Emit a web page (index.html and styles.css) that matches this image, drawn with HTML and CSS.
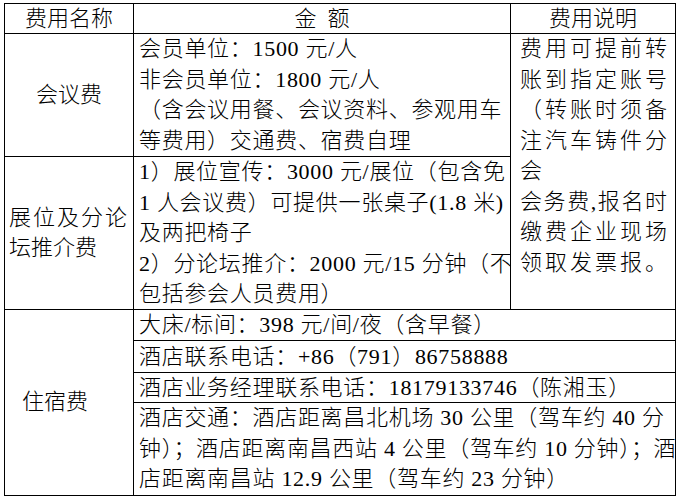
FILE: index.html
```html
<!DOCTYPE html>
<html lang="zh-CN">
<head>
<meta charset="utf-8">
<title>费用说明</title>
<link rel="stylesheet" href="styles.css">
</head>
<body>
<div class="sheet">
  <div class="cell head">费用名称</div>
  <div class="cell head">金&ensp;额</div>
  <div class="cell head">费用说明</div>

  <div class="cell name">会议费</div>
  <div class="cell body">
    <div class="ln">会员单位：1500 元/人</div>
    <div class="ln">非会员单位：1800 元/人</div>
    <div class="ln">（含会议用餐、会议资料、参观用车</div>
    <div class="ln">等费用）交通费、宿费自理</div>
  </div>
  <div class="cell note">
    <div class="ln j">费用可提前转</div>
    <div class="ln j">账到指定账号</div>
    <div class="ln j">（转账时须备</div>
    <div class="ln j">注汽车铸件分</div>
    <div class="ln">会</div>
    <div class="ln j">会务费,报名时</div>
    <div class="ln j">缴费企业现场</div>
    <div class="ln j">领取发票报。</div>
  </div>

  <div class="cell name left">
    <div class="ln j">展位及分论</div>
    <div class="ln">坛推介费</div>
  </div>
  <div class="cell body">
    <div class="ln">1）展位宣传：3000 元/展位（包含免</div>
    <div class="ln">1 人会议费）可提供一张桌子(1.8 米)</div>
    <div class="ln">及两把椅子</div>
    <div class="ln">2）分论坛推介：2000 元/15 分钟（不</div>
    <div class="ln">包括参会人员费用）</div>
  </div>

  <div class="cell name hotel">住宿费</div>
  <div class="cell wide">
    <div class="ln">大床/标间：398 元/间/夜（含早餐）</div>
  </div>
  <div class="cell wide">
    <div class="ln">酒店联系电话：+86（791）86758888</div>
  </div>
  <div class="cell wide">
    <div class="ln">酒店业务经理联系电话：18179133746（陈湘玉）</div>
  </div>
  <div class="cell wide multi">
    <div class="ln">酒店交通：酒店距离昌北机场 30 公里（驾车约 40 分</div>
    <div class="ln">钟）；酒店距离南昌西站 4 公里（驾车约 10 分钟）；酒</div>
    <div class="ln">店距离南昌站 12.9 公里（驾车约 23 分钟）</div>
  </div>
</div>
</body>
</html>
```

FILE: styles.css
```css
html, body {
  margin: 0;
  padding: 0;
  background: #fff;
}

body {
  padding: 3px 0 0 4px;
  font-family: "Liberation Serif", "Noto Sans CJK SC", serif;
  font-size: 22px;
  font-weight: 300;
  color: #000;
}

.sheet {
  display: grid;
  grid-template-columns: 128px 376px 164px;
  grid-template-rows: 29px 122px 152px 30px 31px 29px 92px;
  gap: 1px;
  padding: 1px;
  background: #000;
  width: max-content;
}

.cell {
  background: #fff;
  line-height: 30.5px;
  white-space: nowrap;
}

.ln {
  height: 30.5px;
}

.head {
  display: flex;
  align-items: center;
  justify-content: center;
  line-height: 29px;
}

.name {
  display: flex;
  flex-direction: column;
  justify-content: center;
  align-items: center;
}

.name.left {
  align-items: stretch;
  padding: 0 6px 0 4px;
}

.name.hotel {
  grid-column: 1;
  grid-row: 4 / 8;
  align-items: flex-start;
  padding-left: 17px;
}

.body {
  padding-left: 5px;
  letter-spacing: 0.7px;
}

.note {
  grid-column: 3;
  grid-row: 2 / 4;
  padding: 0 8px 0 9px;
}

.j {
  text-align: justify;
  text-align-last: justify;
}

.wide {
  grid-column: 2 / 4;
  padding-left: 5px;
  letter-spacing: 0.7px;
  display: flex;
  flex-direction: column;
  justify-content: center;
}

.wide .ln {
  height: 30px;
  line-height: 30px;
}

.wide.multi .ln {
  height: 30.6px;
  line-height: 30.6px;
}
```
